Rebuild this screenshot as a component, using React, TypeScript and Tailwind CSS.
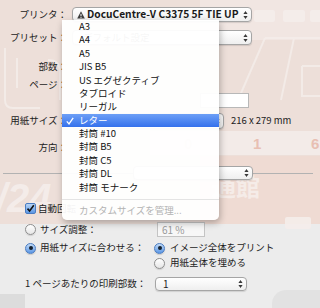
import React from "react";

function Arrows() {
  return (
    <svg width="5" height="9" viewBox="0 0 5 9">
      <path d="M2.5 0.6 L4.6 3.6 L0.4 3.6Z M2.5 8.4 L4.6 5.4 L0.4 5.4Z" fill="#3a3a3a" />
    </svg>
  );
}

function Popup({ className, children }: { className: string; children?: React.ReactNode }) {
  return (
    <div
      className={`relative flex items-center rounded-[4px] border border-[#a5a5a5] bg-gradient-to-b from-white to-[#efefef] shadow-[0_1px_1px_rgba(0,0,0,0.12)] ${className}`}
    >
      {children}
      <span className="absolute right-[3px] top-1/2 flex -translate-y-1/2">
        <Arrows />
      </span>
    </div>
  );
}

function Radio({ on }: { on?: boolean }) {
  return on ? (
    <span className="flex h-[11px] w-[11px] shrink-0 items-center justify-center rounded-full border border-[#4a7cc2] bg-gradient-to-b from-[#c3dcf7] to-[#5a96e4] shadow-[0_1px_1px_rgba(0,0,0,0.15)]">
      <span className="h-[4px] w-[4px] rounded-full bg-[#15202e]" />
    </span>
  ) : (
    <span className="h-[11px] w-[11px] shrink-0 rounded-full border border-[#8e8e8e] bg-gradient-to-b from-white to-[#e6e6e6] shadow-[0_1px_1px_rgba(0,0,0,0.12)]" />
  );
}

function Label({ children }: { children: React.ReactNode }) {
  return <div className="w-[67px] shrink-0 text-right leading-none">{children}</div>;
}

const items = [
  "A3",
  "A4",
  "A5",
  "JIS B5",
  "US エグゼクティブ",
  "タブロイド",
  "リーガル",
  "レター",
  "封筒 #10",
  "封筒 B5",
  "封筒 C5",
  "封筒 DL",
  "封筒 モナーク",
];

function Background() {
  return (
    <svg className="absolute left-0 top-0" width="320" height="308" viewBox="0 0 320 308">
      <rect x="0" y="0" width="320" height="224" fill="#eddfd9" />
      <rect x="200" y="0" width="120" height="40" fill="#f1e6e2" />
      <rect x="150" y="131" width="170" height="24" fill="#f3ebe8" />
      <rect x="200" y="156" width="120" height="68" fill="#efdbd3" />
      <rect x="0" y="224" width="320" height="84" fill="#ececec" />
      <rect x="0" y="294" width="25" height="14" fill="#dcdcdc" />
      <rect x="272" y="290" width="70" height="40" rx="14" fill="#e2e2e2" />
      <g fill="none" stroke="#f5eeeb" strokeWidth="2" opacity="0.8">
        <path d="M265 38 L238 100" />
        <path d="M294 38 L281 100" />
        <path d="M265 38 L320 38" />
        <path d="M302 66 L320 66 M302 66 L302 96 L320 96" />
        <path d="M5 48 L5 100 Q5 108 13 108 L40 108" />
        <path d="M17 58 L17 88" />
        <path d="M48 60 Q60 60 60 72 L60 100" />
      </g>
      <g fill="#f5eeeb" opacity="0.9">
        <rect x="254" y="10" width="21" height="12" rx="2" />
        <rect x="283" y="10" width="22" height="12" rx="2" />
        <rect x="310" y="10" width="12" height="12" rx="2" />
        <rect x="285" y="217" width="26" height="12" rx="2" />
      </g>
      <g fontFamily="Liberation Sans, sans-serif" fontWeight="700">
        <text x="184" y="149" fontSize="15" fill="#ead0c8">0</text>
        <text x="253" y="149" fontSize="15" fill="#e8bfb3">1</text>
        <text x="311" y="149" fontSize="15" fill="#e8bfb3">6</text>
        <text x="-4" y="212" fontSize="40" fontStyle="italic" fill="#f6f0ee" opacity="0.8">/24</text>
      </g>
      <text
        x="212"
        y="196"
        fontSize="24"
        fontWeight="700"
        fontFamily="Noto Sans CJK JP, sans-serif"
        fill="#f7efec"
        opacity="0.85"
      >
        通館
      </text>
    </svg>
  );
}

export default function App() {
  return (
    <div className="relative h-[308px] w-[320px] overflow-hidden bg-[#ececec] font-['Noto_Sans_CJK_JP','Liberation_Sans',sans-serif] text-[9.5px] text-[#1c1c1c]">
      <Background />
      <div className="relative flex flex-col pt-[7px]">
        {/* プリンタ */}
        <div className="flex h-[15px] items-center">
          <Label>プリンタ：</Label>
          <Popup className="ml-[5px] h-[15px] w-[180px]">
            <svg className="ml-[4px] shrink-0" width="8" height="8" viewBox="0 0 8 8">
              <path d="M4 0.3 L7.8 7.6 L0.2 7.6Z" fill="#3d3d3d" />
              <path d="M4 2.8 L4 5.3" stroke="#fff" strokeWidth="1" />
              <rect x="3.5" y="6" width="1" height="0.9" fill="#fff" />
            </svg>
            <span className="ml-[2px] whitespace-nowrap text-[10.2px] font-bold leading-none text-[#1a1a1a]">
              DocuCentre-V C3375 5F TIE UP
            </span>
          </Popup>
        </div>
        {/* プリセット */}
        <div className="mt-[8px] flex h-[15px] items-center">
          <Label>プリセット：</Label>
          <Popup className="ml-[5px] h-[15px] w-[180px]">
            <span className="pl-[10px] leading-none text-[#555]">デフォルト設定</span>
          </Popup>
        </div>
        {/* 部数 */}
        <div className="mt-[15px] flex h-[14px] items-center">
          <Label>部数：</Label>
        </div>
        {/* ページ */}
        <div className="mt-[4px] flex h-[14px] items-center">
          <Label>ページ：</Label>
        </div>
        <div className="mt-[1px] flex h-[15px] items-center pl-[200px]">
          <div className="h-[15px] w-[49px] border border-[#b8b8b8] bg-white" />
        </div>
        {/* 用紙サイズ */}
        <div className="mt-[5px] flex h-[16px] items-center">
          <Label>用紙サイズ：</Label>
          <Popup className="ml-[5px] h-[16px] w-[152px]" />
          <span className="ml-[7px] text-[9.5px] leading-none text-[#222]">216 x 279 mm</span>
        </div>
        {/* 方向 */}
        <div className="mt-[11px] flex h-[15px] items-center">
          <Label>方向：</Label>
        </div>
        {/* section popup */}
        <div className="mt-[11px] flex h-[14px] items-center pl-[3px] pr-[7px]">
          <div className="h-px flex-1 bg-[#b2b2b2]" />
          <Popup className="h-[14px] w-[120px]" />
          <div className="h-px w-[60px] bg-[#b2b2b2]" />
        </div>
        {/* 自動回転 */}
        <div className="mt-[22px] flex h-[13px] items-center pl-[25px]">
          <span className="flex h-[11px] w-[11px] items-center justify-center rounded-[2px] border border-[#4a7cc2] bg-gradient-to-b from-[#b9d5f5] to-[#5a96e4]">
            <svg width="9" height="9" viewBox="0 0 9 9">
              <path d="M1.5 4.6 L3.6 7 L7.8 1.2" fill="none" stroke="#111" strokeWidth="1.6" />
            </svg>
          </span>
          <span className="ml-[2px] leading-none">自動回転</span>
        </div>
        {/* サイズ調整 */}
        <div className="mt-[7px] flex h-[15px] items-center">
          <div className="flex w-[157px] items-center pl-[25px]">
            <Radio />
            <span className="ml-[4px] leading-none">サイズ調整：</span>
          </div>
          <div className="flex h-[15px] w-[48px] items-center border border-[#c4c4c4] bg-[#f7f7f7] pl-[4px] text-[10px] leading-none text-[#9a9a9a]">
            61 %
          </div>
        </div>
        {/* 用紙サイズに合わせる */}
        <div className="mt-[4px] flex h-[14px] items-center">
          <div className="flex w-[154px] items-center pl-[25px]">
            <Radio on />
            <span className="ml-[4px] leading-none">用紙サイズに合わせる：</span>
          </div>
          <Radio on />
          <span className="ml-[5px] leading-none">イメージ全体をプリント</span>
        </div>
        <div className="mt-[1px] flex h-[14px] items-center pl-[154px]">
          <Radio />
          <span className="ml-[5px] leading-none">用紙全体を埋める</span>
        </div>
        {/* 1ページあたり */}
        <div className="mt-[7px] flex h-[14px] items-center">
          <div className="w-[155px] pl-[25px] leading-none">1 ページあたりの印刷部数：</div>
          <Popup className="h-[14px] w-[92px]">
            <span className="pl-[7px] text-[10px] leading-none">1</span>
          </Popup>
        </div>
      </div>

      {/* Dropdown menu */}
      <div className="absolute left-[62px] top-[20px] flex h-[200px] w-[157px] flex-col rounded-b-[5px] bg-white/[0.95] shadow-[1px_3px_7px_rgba(0,0,0,0.28)]">
        {items.map((t) =>
          t === "レター" ? (
            <div
              key={t}
              className="relative flex h-[13.4px] items-center bg-gradient-to-b from-[#6d9ff6] to-[#3470ec] pl-[17px] leading-none text-white"
            >
              <svg className="absolute left-[4px] top-[3px]" width="8" height="8" viewBox="0 0 8 8">
                <path d="M0.8 4.4 L3 6.9 L7.2 0.8" fill="none" stroke="#fff" strokeWidth="1.3" />
              </svg>
              {t}
            </div>
          ) : (
            <div key={t} className="flex h-[13.4px] items-center pl-[17px] leading-none text-[#111]">
              {t}
            </div>
          )
        )}
        <div className="flex h-[10px] items-center">
          <div className="h-px w-full bg-[#e4e4e4]" />
        </div>
        <div className="flex h-[13px] items-center pl-[17px] leading-none text-[#b3b3b3]">
          カスタムサイズを管理...
        </div>
      </div>
    </div>
  );
}
